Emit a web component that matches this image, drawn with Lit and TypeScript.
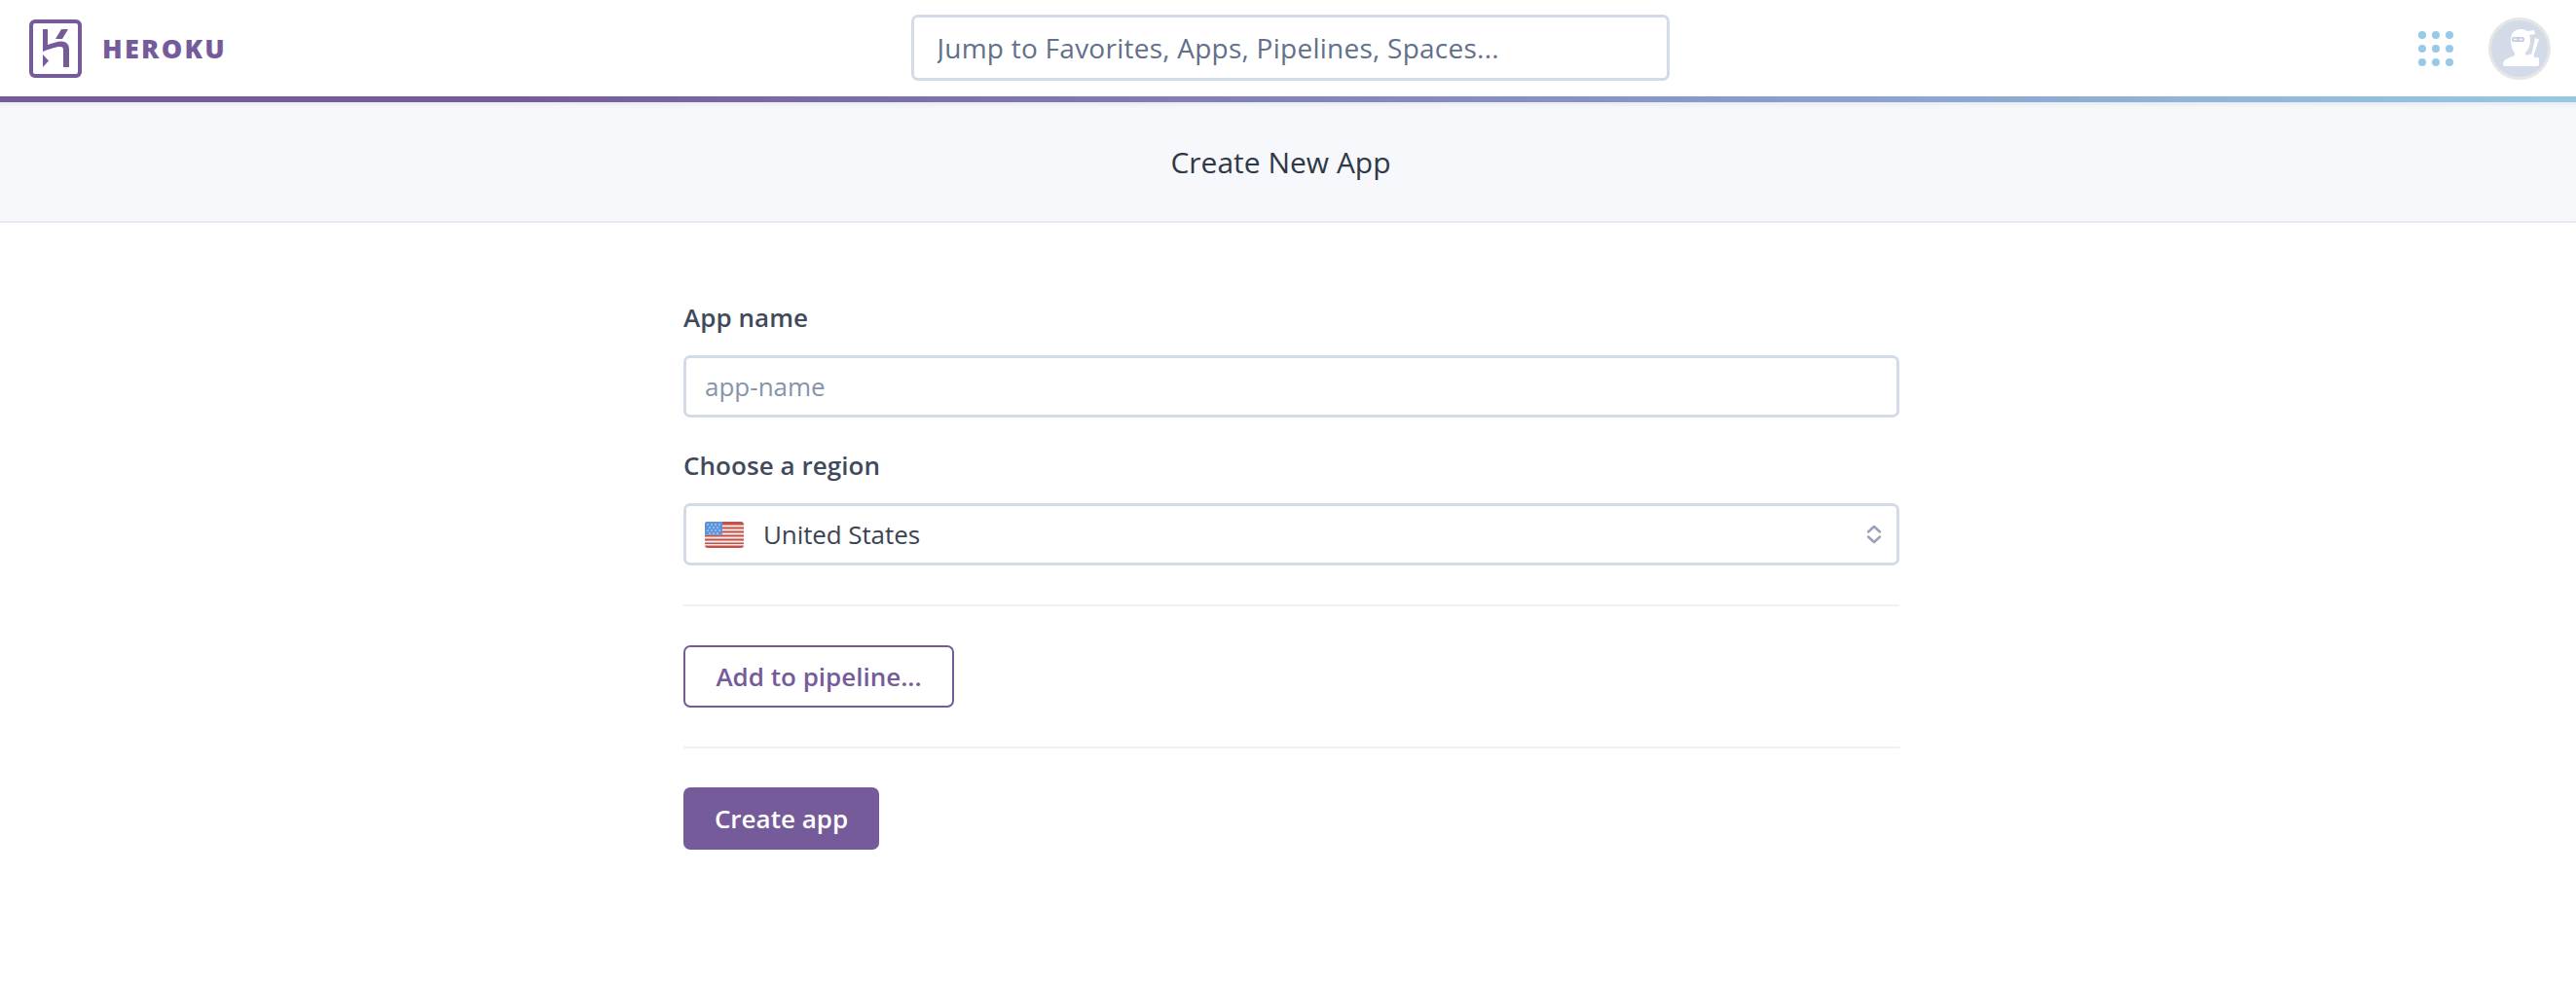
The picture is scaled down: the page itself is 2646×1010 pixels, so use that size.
import { LitElement, html, css } from "lit";
import { customElement } from "lit/decorators.js";

@customElement("app-root")
export class AppRoot extends LitElement {
  static styles = css`
    :host { display: block; font-family: "Open Sans", "Noto Sans", sans-serif; background: #fff; min-height: 1010px; color: #3f4a5c; }
    * { box-sizing: border-box; }
    .nav { height: 99px; display: grid; grid-template-columns: 1fr 779px 1fr; align-items: center; padding: 0 26px 0 30px; }
    .brand { display: flex; align-items: center; gap: 21px; color: #765b9b; }
    .brand svg { display: block; }
    .word { font-size: 27px; font-weight: 800; letter-spacing: 2.3px; line-height: 1; }
    .search { width: 779px; height: 68px; border: 3px solid #d3dae8; border-radius: 7px; padding: 0 24px; font: 400 28px "Open Sans", sans-serif; letter-spacing: 0.25px; outline: none; margin-top: -1px; background: #fff; }
    .search::placeholder { color: #62708a; opacity: 1; }
    .tools { display: flex; justify-content: flex-end; align-items: center; gap: 36px; }
    .dots { display: grid; grid-template-columns: repeat(3, 8px); gap: 6px; }
    .dots i { width: 8px; height: 8px; border-radius: 50%; background: #98c9e8; }
    .avatar { width: 64px; height: 64px; display: block; }
    .bar { height: 6px; background: linear-gradient(90deg, #765b9b 0%, #765b9b 20%, #96c8e6 100%); }
    .sub { height: 124px; background: #f7f8fc; border-bottom: 2px solid #e8eaf0; box-shadow: inset 0 6px 6px -5px rgba(60,70,100,.12); display: flex; align-items: center; justify-content: center; padding-right: 15px; font-size: 30px; color: #2f3847; }
    .wrap { padding: 77px 0 0 7px; }
    .form { width: 1249px; margin: 0 auto; }
    label { display: block; font-size: 26px; font-weight: 600; line-height: 40px; color: #3f4a5c; letter-spacing: 0.05px; }
    .field { display: block; width: 100%; height: 64px; border: 3px solid #d3dae8; border-radius: 7px; margin-top: 19px; background: #fff; }
    input.field { padding: 0 19px; font: 400 26px "Open Sans", sans-serif; outline: none; margin-bottom: 29px; letter-spacing: 0; }
    input.field::placeholder { color: #8694ab; opacity: 1; }
    .select { display: flex; align-items: center; padding: 0 15px 0 19px; font-size: 26px; color: #3b4453; letter-spacing: -0.1px; }
    .select .name { margin-left: 20px; flex: 1; }
    .flag { display: block; width: 40px; height: 27px; }
    hr { border: 0; height: 2px; background: #eef1f6; margin: 40px 0; }
    button { display: block; height: 64px; border-radius: 7px; font: 600 26px "Open Sans", sans-serif; padding: 0; letter-spacing: 0; }
    .ghost { background: #fff; border: 2px solid #765b9b; color: #765b9b; width: 278px; }
    .primary { background: #765b9b; border: 0; color: #fff; width: 201px; }
  `;

  render() {
    return html`
      <header class="nav">
        <div class="brand">
          <svg width="54" height="60" viewBox="0 0 54 60">
            <rect x="2" y="2" width="50" height="56" rx="4" fill="none" stroke="#765b9b" stroke-width="4"/>
            <path fill="#765b9b" d="M14 10h5v16c5-1.500 10-3.500 14-3.500 5 0 8 3 8 8V49h-6V31c0-2-1-3-3-3-4 0-9 1.500-18 5z"/>
            <path fill="#765b9b" d="M33 10h7l-6 10h-7zM14 36l6 6.500L14 49z"/>
          </svg>
          <span class="word">HEROKU</span>
        </div>
        <input class="search" placeholder="Jump to Favorites, Apps, Pipelines, Spaces..." />
        <div class="tools">
          <div class="dots">${Array.from({ length: 9 }, () => html`<i></i>`)}</div>
          <svg class="avatar" viewBox="0 0 64 64">
            <circle cx="32" cy="32" r="30.500" fill="#d3dae8" stroke="#e6e6e6" stroke-width="3"/>
            <path fill="#fff" d="M23 23c0-7 4-11 10-11 3 0 5 .5 7 2l7-1 1 4-6 1c1 2 1 4 1 6 0 5-2 9-5 12v2l7 2 2 1h4c1 0 1 1 1 2v5c0 1-1 2-2 2H17c-1 0-2-1-2-2 0-3 2-5 5-6l7-3v-3c-3-3-4-8-4-13z"/>
            <rect x="24" y="20" width="13" height="5" rx="2" fill="#c5cddd"/>
            <ellipse cx="27.500" cy="22.500" rx="2" ry="1" fill="#f1f3f7"/>
            <ellipse cx="33.500" cy="22.500" rx="2" ry="1" fill="#f1f3f7"/>
            <path fill="#fff" d="M48 21l4 1.500L47.500 36l-1 3 1 1-1.500 2-5-3 1.500-1.500 1.500.5 1-3z"/>
          </svg>
        </div>
      </header>
      <div class="bar"></div>
      <div class="sub">Create New App</div>
      <div class="wrap">
        <main class="form">
          <label>App name</label>
          <input class="field" placeholder="app-name" />
          <label>Choose a region</label>
          <div class="field select">
            <svg class="flag" viewBox="0 0 40 27">
              <rect width="40" height="27" rx="3" fill="#c4504a"/>
              <g fill="#f3eeea">
                <rect y="3.500" width="40" height="2"/><rect y="7.500" width="40" height="2"/><rect y="11.500" width="40" height="2"/>
                <rect y="15.500" width="40" height="2"/><rect y="19.500" width="40" height="2"/><rect y="23" width="40" height="1.500"/>
              </g>
              <path d="M3 0h15v13.500H0V3a3 3 0 0 1 3-3z" fill="#5b93dc"/>
              <g fill="#dbe8f8">
                <circle cx="3" cy="3" r=".8"/><circle cx="7" cy="3" r=".8"/><circle cx="11" cy="3" r=".8"/><circle cx="15" cy="3" r=".8"/>
                <circle cx="5" cy="6" r=".8"/><circle cx="9" cy="6" r=".8"/><circle cx="13" cy="6" r=".8"/>
                <circle cx="3" cy="9" r=".8"/><circle cx="7" cy="9" r=".8"/><circle cx="11" cy="9" r=".8"/><circle cx="15" cy="9" r=".8"/>
                <circle cx="5" cy="12" r=".8"/><circle cx="9" cy="12" r=".8"/><circle cx="13" cy="12" r=".8"/>
              </g>
            </svg>
            <span class="name">United States</span>
            <svg width="16" height="20" viewBox="0 0 16 20" fill="none" stroke="#98a3b5" stroke-width="2.500" stroke-linecap="round" stroke-linejoin="round">
              <path d="M2 7.500 8 2l6 5.500M2 12.500 8 18l6-5.500"/>
            </svg>
          </div>
          <hr />
          <button class="ghost">Add to pipeline...</button>
          <hr />
          <button class="primary">Create app</button>
        </main>
      </div>
    `;
  }
}
